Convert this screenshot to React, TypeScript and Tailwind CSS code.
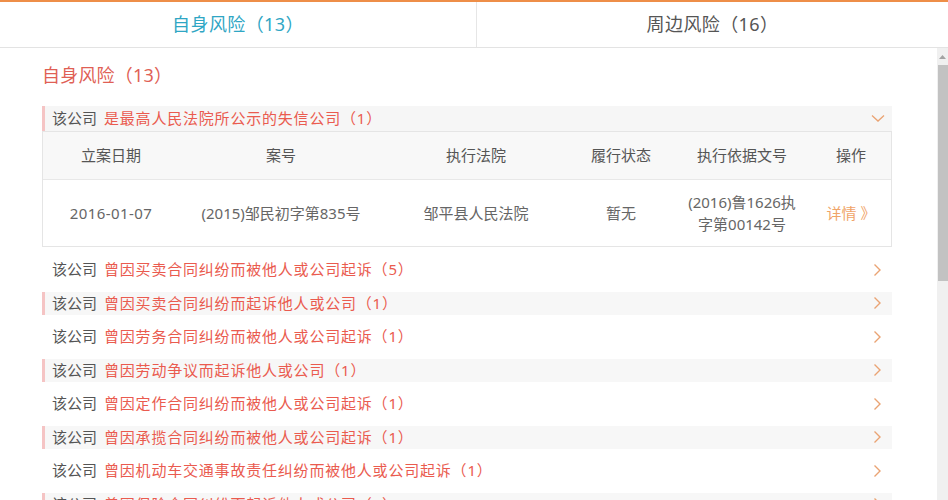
import React from "react";

const font = { fontFamily: '"Noto Sans", "Noto Sans CJK SC", sans-serif' };

function ChevronRight() {
  return (
    <svg width="9" height="14" viewBox="0 0 9 14" className="shrink-0">
      <path d="M1.5 1.5 L7 7 L1.5 12.5" fill="none" stroke="#eaa373" strokeWidth="1.4" />
    </svg>
  );
}

function ChevronDown() {
  return (
    <svg width="14" height="9" viewBox="0 0 14 9" className="shrink-0">
      <path d="M1 1.5 L7 7 L13 1.5" fill="none" stroke="#eaa373" strokeWidth="1.3" />
    </svg>
  );
}

const rows = [
  "曾因买卖合同纠纷而被他人或公司起诉（5）",
  "曾因买卖合同纠纷而起诉他人或公司（1）",
  "曾因劳务合同纠纷而被他人或公司起诉（1）",
  "曾因劳动争议而起诉他人或公司（1）",
  "曾因定作合同纠纷而被他人或公司起诉（1）",
  "曾因承揽合同纠纷而被他人或公司起诉（1）",
  "曾因机动车交通事故责任纠纷而被他人或公司起诉（1）",
  "曾因保险合同纠纷而起诉他人或公司（1）",
];

export default function App() {
  return (
    <div className="h-[500px] w-[948px] overflow-hidden bg-white flex flex-col text-[#555]" style={font}>
      <div className="h-[2px] bg-[#ee8e48]" />
      <div className="flex h-[46px] border-b border-[#e3e3e3]">
        <div className="w-[476px] flex items-center justify-center text-[18px] tracking-[0.4px] text-[#2fa6c4]">自身风险（13）</div>
        <div className="flex-1 border-l border-[#e6e6e6] flex items-center justify-center text-[18px] tracking-[0.4px] text-[#555]">周边风险（16）</div>
      </div>
      <div className="flex flex-1 min-h-0">
        <div className="flex-1 min-w-0 pl-[42px] pr-[45px] pt-[12px] overflow-hidden">
          <div className="h-[30px] leading-[30px] text-[18px] tracking-[0.2px] text-[#e05f55]">自身风险（13）</div>
          <div className="mt-[16px] h-[25px] flex items-center bg-[#f6f6f6] border-l-[3px] border-[#f5c4c4] pl-[7px] pr-[7px] text-[15px]">
            <span className="text-[#555]">该公司</span>
            <span className="ml-[7px] text-[#ea5b4f] tracking-[0.8px] flex-1">是最高人民法院所公示的失信公司（1）</span>
            <ChevronDown />
          </div>
          <div className="border border-[#e5e5e5] text-[15px]">
            <div className="grid grid-cols-[136px_204px_186px_104px_138px_1fr] h-[48px] bg-[#f8f8f8] border-b border-[#e8e8e8] items-center text-center text-[#555]">
              <div>立案日期</div>
              <div>案号</div>
              <div>执行法院</div>
              <div>履行状态</div>
              <div>执行依据文号</div>
              <div>操作</div>
            </div>
            <div className="grid grid-cols-[136px_204px_186px_104px_138px_1fr] h-[66px] items-center text-center text-[#666]">
              <div className="tracking-[0.4px]">2016-01-07</div>
              <div>(2015)邹民初字第835号</div>
              <div>邹平县人民法院</div>
              <div>暂无</div>
              <div className="leading-[22px] px-[10px]">(2016)鲁1626执<br />字第00142号</div>
              <div className="text-[#f0a468]">详情 》</div>
            </div>
          </div>
          <div className="mt-[11px] flex flex-col gap-[10.5px]">
            {rows.map((r, i) => (
              <div
                key={i}
                className={
                  i % 2 === 1
                    ? "h-[23px] flex items-center bg-[#f7f7f7] border-l-[3px] border-[#f5c4c4] pl-[7px] pr-[10px] text-[15px]"
                    : "h-[23px] flex items-center border-l-[3px] border-transparent pl-[7px] pr-[10px] text-[15px]"
                }
              >
                <span className="text-[#555]">该公司</span>
                <span className="ml-[7px] text-[#ea5b4f] tracking-[0.8px] flex-1">{r}</span>
                <ChevronRight />
              </div>
            ))}
          </div>
        </div>
        <div className="w-[11px] bg-[#f0f0f0] flex flex-col items-center">
          <div className="h-[17px] flex items-center justify-center">
            <svg width="7" height="4" viewBox="0 0 7 4"><path d="M0 4 L3.5 0 L7 4 Z" fill="#a3a3a3" /></svg>
          </div>
          <div className="w-[10px] h-[216px] bg-[#c2c2c2]" />
        </div>
      </div>
    </div>
  );
}
